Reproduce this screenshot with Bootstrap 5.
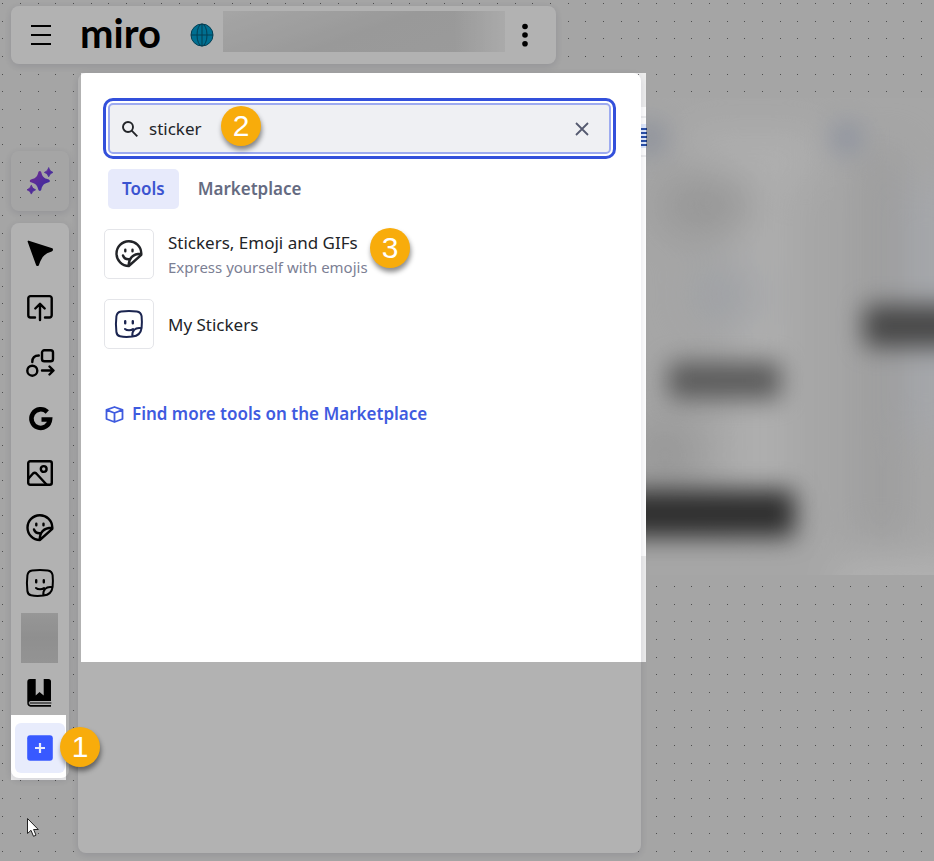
<!DOCTYPE html>
<html lang="en">
<head>
<meta charset="utf-8">
<meta name="viewport" content="width=device-width, initial-scale=1">
<title>Miro board</title>
<link href="https://cdn.jsdelivr.net/npm/bootstrap@5.3.0/dist/css/bootstrap.min.css" rel="stylesheet">
<style>
  body { font-family: "Noto Sans", sans-serif; font-size: 17px; line-height: 24px; color: #222428; background: #ededed; overflow: hidden; }
  .board-app { padding: 6px 11px 8px; gap: 9px; }
  .board-layer { inset: 0; z-index: 0; pointer-events: none; }
  .dim-layer { inset: 0; z-index: 20; pointer-events: none; }
  .surface { background: #fff; border-radius: 8px; box-shadow: 0 2px 8px rgba(5, 0, 56, .12); }
  .icon-30 { width: 30px; height: 30px; fill: none; stroke: currentColor; stroke-width: 2; stroke-linecap: round; stroke-linejoin: round; }
  .butt { stroke-linecap: butt; stroke-linejoin: miter; }
  .bold-line { stroke-width: 2.4; }
  .navy { color: #1b2550; }

  .top-bar { max-width: 545px; height: 58px; padding: 5px 15px 5px 14px; z-index: 1; }
  .plain-btn { border: 0; background: none; padding: 0; color: #000; display: flex; align-items: center; justify-content: center; }
  .menu-btn { width: 32px; height: 48px; }
  .miro-logo { font-family: Lato, sans-serif; font-weight: 700; font-size: 40px; line-height: 44px; padding-bottom: 4px; color: #000; margin-left: 23px; width: 84px; }
  .board-globe { width: 24px; height: 24px; margin: 0 9px 0 26px; }
  .board-title { height: 41px; background: linear-gradient(90deg, transparent 82%, #f4f4f4), linear-gradient(160deg, #ededed, #dcdcdc 50%, #dedede); }
  .more-btn { width: 32px; height: 48px; margin-left: 4px; }

  .tool-col { width: 58px; gap: 12px; padding-top: 2px; }
  .ai-btn { width: 58px; height: 60px; }
  .tool-rail { padding: 5px 4px; gap: 5px; }
  .tool-btn { width: 50px; height: 50px; border-radius: 6px; }
  .tool-btn.is-active { background: #e8ecfc; }
  .hidden-app { width: 37px; height: 50px; margin: 0 7px 0 6px; background: linear-gradient(180deg, #d8d8d8, #cdcdcd 50%, #d4d4d4); }

  .tool-area { gap: 9px; z-index: 1; }
  .finder { max-width: 563px; padding: 30px 26px; }
  .inset-4 { margin-left: 4px; margin-right: 4px; }
  .search-box { height: 51px; border: 2px solid #9dabf0; border-radius: 5px; background: #eff0f3; outline: 3px solid #3350db; outline-offset: 2px; padding: 0 17px 0 11px; }
  .search-box input { border: 0; outline: 0; background: none; padding: 0; margin-left: 10px; color: #222428; min-width: 0; font-size: 17px; }
  .step { width: 40px; height: 40px; border-radius: 50%; background: #f8ac0b; color: #fff; font: 30px/40px "Liberation Sans", sans-serif; text-align: center; box-shadow: 1px 4px 5px rgba(0, 0, 0, .45); z-index: 30; }
  .step-add { left: 60px; top: 727px; }
  .step-search { left: 111px; top: 1px; }
  .step-result { left: 266px; top: -1px; }
  .finder-tabs { margin-top: 15px; gap: 5px; }
  .finder-tab { border: 0; background: none; border-radius: 5px; padding: 8px 14px; font-weight: 600; color: #656b81; }
  .finder-tab.is-active { background: #e7eafb; color: #3b54d0; }
  .results { margin-top: 20px; gap: 20px; }
  .result-row { gap: 14px; color: #222428; }
  .result-tile { width: 50px; height: 50px; border: 1px solid #e4e5e9; border-radius: 5px; }
  .result-text { padding-top: 2px; }
  .result-note { font-size: 15px; color: #7c8094; }
  .market-link { margin-top: 53px; gap: 8px; padding-left: 1px; font-weight: 600; color: #3f5bdf; }
  .pointer { left: 26px; top: 817px; width: 14px; height: 21px; z-index: 30; }
</style>
<script src="https://cdn.jsdelivr.net/npm/bootstrap@5.3.0/dist/js/bootstrap.bundle.min.js"></script>
</head>
<body>

<svg class="position-absolute" width="0" height="0" aria-hidden="true">
  <defs>
    <symbol id="i-emoji" viewBox="0 0 30 30">
      <path d="M27.3 14.2A12.4 12.4 0 1 0 14.8 27L27.3 15.8z M14.8 27C14.5 19.5 18.5 14.8 27 14.8 M9 16.5C10 19.3 12.5 20.6 15.7 20.2"/>
      <path d="M11.3 10.8v1.4M18.5 10.8v1.4"/>
    </symbol>
    <symbol id="i-mysticker" viewBox="0 0 30 30">
      <path d="M18.5 27.6C13.5 28.2 8.5 27.9 6 27.3C3.6 26.7 2.7 25.2 2.4 23C1.8 18 1.8 12 2.4 7.3C2.8 4.2 4.2 2.8 7.2 2.4C12 1.8 18 1.8 22.8 2.4C25.8 2.8 27.2 4.2 27.6 7.2C28 11 28 15 27.6 18.8C27 23.5 23.5 27 18.5 27.6z M18.5 27.6C17.5 22 21 18 27.4 19.2M11 20C13 21.8 17 21.8 19 20" />
      <path d="M11.2 12.3v2M18.8 12.3v2" stroke-width="2.4"/>
    </symbol>
    <linearGradient id="ai-fill" x1="0" y1="0" x2="1" y2="1"><stop offset="0" stop-color="#a83fd0"/><stop offset="1" stop-color="#4940e8"/></linearGradient>
    <pattern id="dots" width="53" height="53" patternUnits="userSpaceOnUse">
      <path fill="#707070" d="M2 3h1v1h-1zM20 3h1v1h-1zM38 3h1v1h-1zM2 21h1v1h-1zM20 21h1v1h-1zM38 21h1v1h-1zM2 38h1v1h-1zM20 38h1v1h-1zM38 38h1v1h-1z"/>
    </pattern>
    <filter id="soft" x="-50%" y="-100%" width="200%" height="300%" color-interpolation-filters="sRGB"><feGaussianBlur stdDeviation="12"/></filter>
    <filter id="softer" x="-80%" y="-80%" width="260%" height="260%" color-interpolation-filters="sRGB"><feGaussianBlur stdDeviation="20"/></filter>
    <clipPath id="blur-area"><rect x="646" y="98" width="600" height="477"/></clipPath>
  </defs>
</svg>

<!-- Board canvas -->
<svg class="board-layer position-absolute w-100 h-100" aria-hidden="true">
  <rect width="100%" height="100%" fill="url(#dots)"/>
  <g clip-path="url(#blur-area)">
    <rect x="646" y="98" width="600" height="477" fill="#eeeeee"/>
    <g filter="url(#softer)">
      <path fill="#fafafa" d="M690 130h130v50h-30v340h-60v-270h-30z"/>
      <ellipse cx="705" cy="206" rx="48" ry="34" fill="#d9d9d9"/>
      <ellipse cx="665" cy="455" rx="35" ry="40" fill="#dadada"/>
      <ellipse cx="725" cy="295" rx="35" ry="30" fill="#e4e7ed"/>
      <rect x="862" y="150" width="38" height="390" fill="#dfdfe0"/>
      <rect x="905" y="185" width="60" height="250" fill="#eceff5"/>
      <rect x="835" y="560" width="300" height="60" fill="#fff"/>
    </g>
    <g filter="url(#soft)">
      <circle cx="847" cy="138" r="16" fill="#ccd3e4"/>
      <circle cx="649" cy="138" r="18" fill="#ccd2df"/>
      <rect x="668" y="362" width="113" height="37" rx="6" fill="#828282"/>
      <rect x="864" y="305" width="300" height="42" rx="6" fill="#666"/>
      <rect x="615" y="490" width="180" height="47" rx="6" fill="#424242"/>
    </g>
  </g>
  <rect x="636" y="107" width="10" height="449" fill="#fff"/>
  <path d="M636 117h10M636 156h10" stroke="#dcdde0"/>
  <rect x="636" y="124" width="10" height="24" fill="#dfe9fd"/>
  <path d="M636 129h11M636 133h11M636 137h11M636 141h11M636 145h11" stroke="#2a50a8" stroke-width="2"/>
</svg>

<div class="board-app d-flex flex-column min-vh-100 position-relative">
  <header class="top-bar surface d-flex align-items-center position-relative w-100">
    <button class="plain-btn menu-btn" type="button" aria-label="Menu">
      <svg class="icon-30 butt" viewBox="0 0 30 30"><path d="M5 6h20M5 15h20M5 24h20"/></svg>
    </button>
    <a class="miro-logo text-decoration-none" href="#">miro</a>
    <svg class="board-globe flex-shrink-0" viewBox="0 0 24 24" fill="none" stroke="#075a78" stroke-width="1"><circle cx="12" cy="12" r="11" fill="#00a0d0"/><ellipse cx="12" cy="12" rx="5" ry="11"/><path d="M1 12h22M12 1v22"/></svg>
    <div class="board-title flex-grow-1 align-self-start"></div>
    <button class="plain-btn more-btn" type="button" aria-label="More">
      <svg class="icon-30" viewBox="0 0 30 30"><g fill="#000" stroke="none"><circle cx="15" cy="6.500" r="2.800"/><circle cx="15" cy="15" r="2.800"/><circle cx="15" cy="23.700" r="2.800"/></g></svg>
    </button>
  </header>

  <main class="tool-area d-flex flex-grow-1 position-relative">
    <nav class="tool-col d-flex flex-column justify-content-center flex-shrink-0" aria-label="Tools">
      <button class="plain-btn ai-btn surface" type="button" aria-label="AI">
        <svg class="icon-30" viewBox="0 0 30 30"><g fill="url(#ai-fill)" stroke="none"><path d="M14.800 5C15.700 5 16.200 5.800 16.400 6.700C17.300 10.500 19 12.300 23 13.200C25.500 13.800 25.500 16 23 16.600C19 17.500 17.300 19.500 16.400 23.300C16 25.500 13.700 25.500 13.200 23.300C12.300 19.500 10.500 17.500 6.700 16.600C4.200 16 4.200 13.800 6.700 13.200C10.500 12.300 12.300 10.500 13.200 6.700C13.400 5.800 13.900 5 14.800 5z"/><path d="M23.700 2q1 3.500 4.300 4.400q-3.300.9-4.300 4.400q-1-3.500-4.300-4.400q3.300-.9 4.300-4.400z" stroke="#6a3fdc" stroke-width=".8"/><path d="M6.300 19.500q1 3.400 4.300 4.300q-3.300.9-4.300 4.300q-1-3.400-4.300-4.300q3.300-.9 4.300-4.300z" stroke="#7a3fd8" stroke-width=".8"/></g></svg>
      </button>
      <div class="tool-rail surface d-flex flex-column">
        <button class="plain-btn tool-btn" type="button" aria-label="Select"><svg class="icon-30" viewBox="0 0 30 30"><path d="M3.500 3.500L27 11.200Q27.300 12.400 26.500 12.600C20.500 13.800 17 16.500 14.500 23L13 27H12z" fill="#000" stroke-width="1.800"/></svg></button>
        <button class="plain-btn tool-btn" type="button" aria-label="Upload"><svg class="icon-30 bold-line" viewBox="0 0 30 30"><path d="M10 24.500H5.500a2.200 2.200 0 0 1-2.200-2.200V5.300a2.200 2.200 0 0 1 2.200-2.200h19a2.200 2.200 0 0 1 2.200 2.200v17a2.200 2.200 0 0 1-2.200 2.200H20M15 27V11M10.300 15.500L15 10.800l4.700 4.700"/></svg></button>
        <button class="plain-btn tool-btn" type="button" aria-label="Shapes and lines"><svg class="icon-30 bold-line" viewBox="0 0 30 30"><circle cx="7.300" cy="22.700" r="5"/><rect x="17" y="2.300" width="11" height="11" rx="2.300"/><path d="M7.300 14C7.300 9.500 9.500 7.500 13.800 7.500M17 22.500h11M24.500 18.500l4 4-4 4"/></svg></button>
        <button class="plain-btn tool-btn" type="button" aria-label="Google"><svg class="icon-30 butt" viewBox="0 0 30 30"><path d="M22.300 9A9.300 9.300 0 1 0 25 16.500H16.500" stroke-width="4.600"/></svg></button>
        <button class="plain-btn tool-btn" type="button" aria-label="Image"><svg class="icon-30 bold-line" viewBox="0 0 30 30"><rect x="3.200" y="3.200" width="23.600" height="23.600" rx="2"/><circle cx="18.700" cy="11" r="2.900"/><path d="M3.500 20.500L8 15.500Q9.700 14 11.300 15.500L21.500 26.500"/></svg></button>
        <button class="plain-btn tool-btn" type="button" aria-label="Stickers, Emoji and GIFs"><svg class="icon-30 bold-line"><use href="#i-emoji"/></svg></button>
        <button class="plain-btn tool-btn" type="button" aria-label="My Stickers"><svg class="icon-30"><use href="#i-mysticker"/></svg></button>
        <div class="hidden-app"></div>
        <button class="plain-btn tool-btn" type="button" aria-label="Library"><svg class="icon-30" viewBox="0 0 30 30"><g stroke="none"><path fill="#000" d="M5 1H10.700V17.500L14.500 14L18.700 17.500V1H23.500Q26 1 26 3.500V23H5.500Q3.700 23.400 3.700 25T5.500 26.900H26V28.700H5.500Q2.300 28.300 2.300 25V4Q2.300 1 5 1z"/><path stroke="#000" stroke-width="1" d="M5 25h21"/></g></svg></button>
        <button class="plain-btn tool-btn is-active" type="button" aria-label="More tools"><svg class="icon-30 butt" viewBox="0 0 30 30"><rect x="2.200" y="2.200" width="25.600" height="25.600" rx="3" fill="#3859ff" stroke="none"/><path d="M15 10v10M10 15h10" stroke="#e8ecfc" stroke-width="2.200"/></svg></button>
      </div>
    </nav>

    <section class="finder surface flex-grow-1">
      <div class="search-box inset-4 d-flex align-items-center position-relative">
        <svg width="18" height="18" viewBox="0 0 18 18" fill="none" stroke="#222428" stroke-width="1.900" class="flex-shrink-0" aria-hidden="true"><circle cx="7" cy="7" r="5"/><path d="M10.700 10.700L16.300 16.300"/></svg>
        <input class="flex-grow-1" type="text" value="sticker" aria-label="Search tools">
        <button class="plain-btn" type="button" aria-label="Clear"><svg width="20" height="20" viewBox="0 0 20 20" stroke="#555a70" stroke-width="1.800"><path d="M4 4l12 12M16 4L4 16"/></svg></button>
        <span class="step step-search position-absolute">2</span>
      </div>
      <div class="finder-tabs inset-4 d-flex" role="tablist">
        <button class="finder-tab is-active" type="button" role="tab" aria-selected="true">Tools</button>
        <button class="finder-tab" type="button" role="tab" aria-selected="false">Marketplace</button>
      </div>
      <div class="results d-flex flex-column">
        <a class="result-row d-flex align-items-center text-decoration-none position-relative" href="#">
          <span class="result-tile d-flex align-items-center justify-content-center"><svg class="icon-30 bold-line"><use href="#i-emoji"/></svg></span>
          <span class="result-text d-flex flex-column"><span>Stickers, Emoji and GIFs</span><span class="result-note">Express yourself with emojis</span></span>
          <span class="step step-result position-absolute">3</span>
        </a>
        <a class="result-row d-flex align-items-center text-decoration-none" href="#">
          <span class="result-tile d-flex align-items-center justify-content-center"><svg class="icon-30 navy"><use href="#i-mysticker"/></svg></span>
          <span class="result-text">My Stickers</span>
        </a>
      </div>
      <a class="market-link d-inline-flex align-items-center text-decoration-none" href="#">
        <svg width="19" height="19" viewBox="0 0 19 19" fill="none" stroke="currentColor" stroke-width="1.800" stroke-linejoin="round" aria-hidden="true"><path d="M9.500 2L17.500 4.800V14L9.500 17L1.500 14V4.800zM1.500 4.800L9.500 8L17.500 4.800M9.500 8V17"/></svg>
        Find more tools on the Marketplace
      </a>
    </section>
  </main>
</div>

<!-- Dimming with two highlighted areas -->
<svg class="dim-layer position-absolute w-100 h-100" aria-hidden="true">
  <path fill="#000" fill-opacity=".3" fill-rule="evenodd" d="M0 0H4000V4000H0zM81 73H646V662H81zM11 715H66V780H11z"/>
</svg>
<span class="step step-add position-absolute">1</span>
<svg class="pointer position-absolute" viewBox="0 0 14 21" aria-hidden="true"><path d="M1.500 1.500V16.500L5 13.300L7.500 19.300L10 18.200L7.600 12.500H12.300z" fill="#fff" stroke="#222" stroke-width="1"/></svg>
</body>
</html>
